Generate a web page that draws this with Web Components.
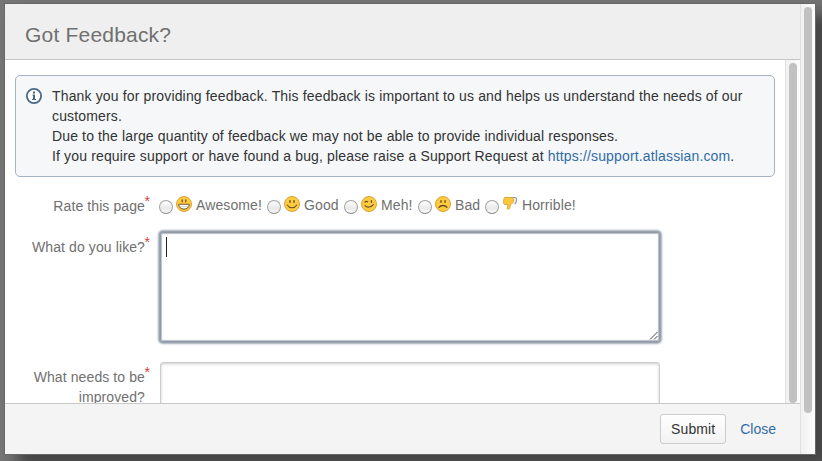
<!DOCTYPE html>
<html lang="en"><head><meta charset="utf-8"><title>Got Feedback?</title>
<style>
html,body{margin:0;height:100%;overflow:hidden}
body{font:14px/20px "Liberation Sans",Arial,sans-serif;background:#757575}
</style></head><body>
<feedback-dialog></feedback-dialog>
<script>
const define=(name,html,init)=>customElements.define(name,class extends HTMLElement{
  constructor(){super();const r=this.attachShadow({mode:'open'});const t=document.createElement('template');t.innerHTML=html;r.append(t.content.cloneNode(true));}
  connectedCallback(){if(init)init(this,this.shadowRoot);}
});
const yellow='fill="#fdcb3f" stroke="#d9a238"';
const ink='fill="none" stroke="#684b24" stroke-linecap="round" stroke-linejoin="round"';
const face=`<circle cx="8" cy="8" r="7.5" ${yellow}/>`;
const eyes=`<path d="M6 4.700v1.600M10 4.700v1.600" ${ink} stroke-width="1.400"/>`;
const icons={
 grin:face+`<path d="M6.200 3.800v2M9.800 3.800v2" ${ink} stroke-width="1.200"/><path d="M2.700 8.300h10.600c-.3 3.200-2.300 4.800-5.300 4.800s-5-1.600-5.300-4.800z" fill="#fff" stroke="#684b24" stroke-width=".9"/><path d="M4 10.500h8" stroke="#c8bda8" stroke-width=".6"/>`,
 smile:face+eyes+`<path d="M3.500 9.200c2 3.300 7 3.300 9 0" ${ink} stroke-width="1.100"/>`,
 wink:face+`<path d="M4 6c.7-.8 1.700-.8 2.600-.2M10.400 4.500v2" ${ink} stroke-width="1.200"/><path d="M4 9.700c2.200 2.300 6.300 1.700 8.300-1" ${ink} stroke-width="1.100"/>`,
 sad:face+eyes+`<path d="M4 11.300c1.800-2.400 6.200-2.400 8 0" ${ink} stroke-width="1.300"/>`,
 down:`<path d="M9.500 1.500h3.200c1.500 0 2 1 1.900 2.500-.1 2-.8 3.500-2 4.200" fill="#f1f1f1" stroke="#999" stroke-width="1.200"/><path d="M2.800 1.500h7.400c1.300.7 1.400 2.500 1.200 4.200-.2 1.600-1.700 1.800-2.600 2.800-.8 1-.5 2.300-1.300 4.100-.4 1-2.200.9-2.300-.2-.2-1.700.9-2.500.8-4H2.900C1.500 8.200 1.200 7 1.500 5.700L2 2.500c.1-.5.300-.9.800-1z" fill="#fdc83c" stroke="#d09a2d" stroke-width=".8"/>`
};
define('scroll-bar',`<style>:host{display:block;box-sizing:border-box;width:15px;border-left:1px solid #e0e0e0;background:linear-gradient(90deg,#f1f1f1,#fcfcfc);padding:3px 0 0 3px}
i{display:block;width:8px;height:var(--thumb);border-radius:4px;background:#c1c1c1}</style><i></i>`);
define('info-message',`<style>:host{display:block;box-sizing:border-box;width:760px;height:102px;border:1px solid #a4b3c7;border-radius:5px;background:#f5f7f9;padding:10px 0 0 10px;color:#333}
.row{display:flex;gap:10px}svg{display:block;width:16px;height:16px;margin-top:2px;flex:none}</style>
<div class="row"><svg viewBox="0 0 16 16"><circle cx="8" cy="8" r="7.100" fill="#fff" stroke="#4a6785" stroke-width="1.800"/><path d="M6.500 6.500H9V11h1v1H6v-1h1V7.500h-.5zM7 3.500h2v2H7z" fill="#4a6785"/></svg><div><slot></slot></div></div>`);
define('text-line',`<style>:host{display:block;white-space:nowrap}</style><slot></slot>`);
define('text-link',`<style>:host{color:#326ca6}</style><slot></slot>`);
define('field-row',`<style>:host{display:grid;grid-template-columns:140px auto;column-gap:15px}
.label{position:relative;text-align:right;color:#707070;padding-top:var(--label-top,5px)}
.label b{position:absolute;left:139.500px;top:var(--star-top,2px);font:14px/16px "Liberation Sans",Arial,sans-serif;letter-spacing:0;color:#d04437}</style>
<div class="label"><slot name="label"></slot><b>*</b></div><slot></slot>`);
define('rating-options',`<style>:host{display:grid;grid-template-columns:108px 77px 74px 67px auto;margin-left:-1px}</style><slot></slot>`);
define('rating-option',`<style>:host{display:flex;white-space:nowrap;color:#707070;height:20px;letter-spacing:.1px}
i{box-sizing:border-box;width:14px;height:14px;border:1px solid #a3a3a3;border-bottom-color:#888;border-radius:50%;background:linear-gradient(#fff,#e9e9e9 60%,#fbfbfb);margin:5px 3px 0 0;flex:none}
svg{width:16px;height:16px;margin:1px 4px 0 0;flex:none}</style><i></i><svg viewBox="0 0 16 16"></svg><span><slot></slot></span>`,(e,r)=>{r.querySelector('svg').innerHTML=icons[e.getAttribute('icon')];});
define('text-box',`<style>:host{display:block;position:relative;box-sizing:border-box;width:500px;height:110px;border:1px solid #ccc;border-radius:3px;background:#fff;box-shadow:inset 0 1px 3px #ccc}
i,svg{display:none}
:host([focused]){border-color:#919ba8;box-shadow:0 0 0 1px #9aa4b0,0 0 2px 2px #a3adb9,inset 0 0 1px 1px #b6bec8}
:host([focused]) i{display:block;width:1px;height:20px;background:#222;margin:4px 0 0 5px}
:host([focused]) svg{display:block;position:absolute;right:1px;bottom:1px}</style><i></i><svg width="9" height="9"><path d="M1 8.500L8.500 1M5 8.500L8.500 5" stroke="#444" fill="none"/></svg>`);
define('push-button',`<style>:host{box-sizing:border-box;width:66px;height:30px;border:1px solid #ccc;border-radius:3px;background:linear-gradient(#fff,#f2f2f2);color:#333;text-align:center;line-height:28px;letter-spacing:.1px}</style><slot></slot>`);
define('feedback-dialog',`<style>
:host{display:grid;grid-template-columns:795px 15px;width:810px;height:450px;margin:4px 0 0 5px;background:#fff;box-shadow:0 0 0 1px #686868,14px 12px 14px 2px #444}
.main{display:grid;grid-template-rows:56px 343px 51px;min-width:0}
header{box-sizing:border-box;background:#efefef;border-bottom:1px solid #c6c6c6;padding:21px 20px 0;font-size:21px;letter-spacing:.2px;color:#707070}
.body{display:grid;grid-template-columns:780px 15px;overflow:hidden;min-height:0}
.form{padding:15px 10px 0;overflow:hidden}
.rating{margin-top:18px;height:37px;--label-top:1px;--star-top:-2px}
.like{height:130px}
field-row{margin-left:-10px}
footer{box-sizing:border-box;border-top:1px solid #c8c8c8;background:#f4f4f4;padding:10px 24px 0 0;display:flex;justify-content:flex-end;gap:14px;line-height:30px}
.label-text{letter-spacing:.1px}
.wide{letter-spacing:.15px}
.mid{letter-spacing:.135px}
</style>
<div class="main"><header><text-line>Got Feedback?</text-line></header>
<div class="body"><div class="form">
<info-message><text-line class="wide">Thank you for providing feedback. This feedback is important to us and helps us understand the needs of our</text-line><text-line class="wide">customers.</text-line><text-line class="mid">Due to the large quantity of feedback we may not be able to provide individual responses.</text-line><text-line class="wide">If you require support or have found a bug, please raise a Support Request at <text-link>https://support.atlassian.com</text-link>.</text-line></info-message>
<field-row class="rating"><span slot="label" class="label-text">Rate this page</span><rating-options><rating-option icon="grin">Awesome!</rating-option><rating-option icon="smile">Good</rating-option><rating-option icon="wink">Meh!</rating-option><rating-option icon="sad">Bad</rating-option><rating-option icon="down">Horrible!</rating-option></rating-options></field-row>
<field-row class="like"><span slot="label" class="label-text">What do you like?</span><text-box focused></text-box></field-row>
<field-row><span slot="label" class="label-text">What needs to be<br>improved?</span><text-box></text-box></field-row>
</div><scroll-bar style="--thumb:340px"></scroll-bar></div>
<footer><push-button>Submit</push-button><text-link>Close</text-link></footer></div>
<scroll-bar style="--thumb:406px"></scroll-bar>`);
</script></body></html>
